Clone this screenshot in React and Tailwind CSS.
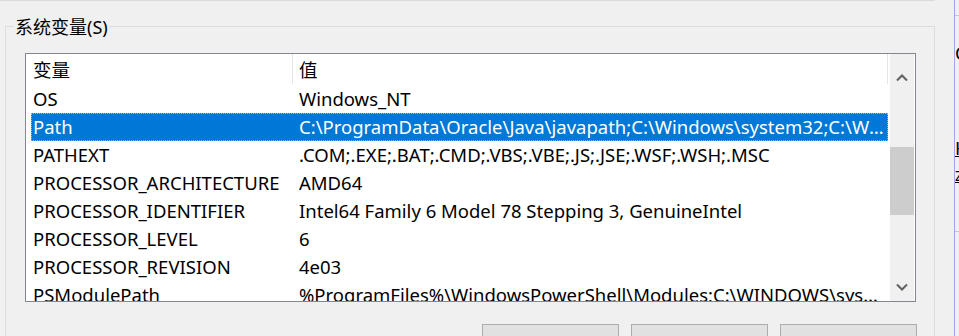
import React from 'react';

const rows = [
  ['OS', 'Windows_NT'],
  ['Path', 'C:\\ProgramData\\Oracle\\Java\\javapath;C:\\Windows\\system32;C:\\Windows;C:\\Windows\\System32\\Wbem'],
  ['PATHEXT', '.COM;.EXE;.BAT;.CMD;.VBS;.VBE;.JS;.JSE;.WSF;.WSH;.MSC'],
  ['PROCESSOR_ARCHITECTURE', 'AMD64'],
  ['PROCESSOR_IDENTIFIER', 'Intel64 Family 6 Model 78 Stepping 3, GenuineIntel'],
  ['PROCESSOR_LEVEL', '6'],
  ['PROCESSOR_REVISION', '4e03'],
  ['PSModulePath', '%ProgramFiles%\\WindowsPowerShell\\Modules;C:\\WINDOWS\\system32\\WindowsPowerShell\\v1.0\\Modules'],
];

const font = { fontFamily: '"Noto Sans", "Noto Sans CJK SC", sans-serif' };

const Chevron = ({ down }) => (
  <svg width="12" height="8" viewBox="0 0 12 8" className="block">
    <path
      d={down ? 'M1 1.5 L6 6.5 L11 1.5' : 'M1 6.5 L6 1.5 L11 6.5'}
      fill="none"
      stroke="#606060"
      strokeWidth="2"
    />
  </svg>
);

const Row = ({ name, value, selected }) => (
  <div
    className={`ml-[5px] h-[28px] flex items-center leading-[26px] ${
      selected ? 'bg-[#0078d7] text-white outline-1 outline-dotted outline-[#f7a33a] -outline-offset-1' : 'text-black'
    }`}
  >
    <div className="w-[261px] shrink-0 pl-[2px] whitespace-nowrap overflow-hidden">{name}</div>
    <div className="flex-1 min-w-0 pl-[7px] pr-[4px] truncate">{value}</div>
  </div>
);

export default function App() {
  return (
    <div className="w-[959px] h-[336px] overflow-hidden bg-[#f0f0f0] flex text-[18.5px] leading-none" style={font}>
      <div className="w-[954px] shrink-0">
        <div className="h-px w-[935px] bg-[#dadada]" />
        <div className="relative ml-[5px] mt-[25px] w-[930px] h-[400px] border border-[#dcdcdc] pl-[19px] pt-[26px]">
          <span className="absolute left-[8px] -top-[10px] px-[1px] bg-[#f0f0f0] text-black text-[18px] leading-[20px]">系统变量(S)</span>

          <div className="w-[891px] h-[249px] border border-[#828790] bg-white flex">
            <div className="flex-1 min-w-0 overflow-hidden">
              <div className="h-[31px] flex items-center ml-[5px] text-black leading-[26px]">
                <div className="w-[261px] shrink-0 pl-[2px]">变量</div>
                <div className="w-px h-[30px] self-start bg-[#e5e5e5]" />
                <div className="flex-1 pl-[6px]">值</div>
                <div className="w-px h-[30px] self-start bg-[#e5e5e5]" />
              </div>
              {rows.map(([n, v]) => (
                <Row key={n} name={n} value={v} selected={n === 'Path'} />
              ))}
            </div>
            <div className="w-[2px] shrink-0" />
            <div className="w-[24px] shrink-0 bg-[#f0f0f0] flex flex-col items-center">
              <div className="h-[31px] flex items-end pb-[3px]">
                <Chevron />
              </div>
              <div className="h-[62px]" />
              <div className="w-full h-[68px] bg-[#cdcdcd]" />
              <div className="flex-1" />
              <div className="pb-[10px]">
                <Chevron down />
              </div>
            </div>
            <div className="w-px shrink-0" />
          </div>

          <div className="flex pl-[457px] gap-[12px] mt-[22px] text-[18px]">
            <div className="w-[137px] h-[40px] border border-[#adadad] bg-[#e1e1e1] text-center pt-[13px] text-[#e1e1e1]">新建(W)...</div>
            <div className="w-[137px] h-[40px] border border-[#adadad] bg-[#e1e1e1] text-center pt-[13px] text-black">编辑(E)...</div>
            <div className="w-[137px] h-[40px] border border-[#adadad] bg-[#e1e1e1] text-center pt-[13px] text-[#e1e1e1]">删除(L)</div>
          </div>
        </div>
      </div>
      <div className="w-px shrink-0 bg-[#a3a3e8]" />
      <div className="flex-1 overflow-hidden relative">
        <div className="h-px bg-[#c8c8c8] mt-[15px]" />
        <div className="mt-[28px] text-black whitespace-nowrap">Ca</div>
        <div className="mt-[76px] text-black whitespace-nowrap underline">H</div>
        <div className="mt-[12px] text-[14px] text-black whitespace-nowrap underline">Z</div>
        <div className="h-px bg-[#c8c8c8] mt-[48px]" />
      </div>
    </div>
  );
}
